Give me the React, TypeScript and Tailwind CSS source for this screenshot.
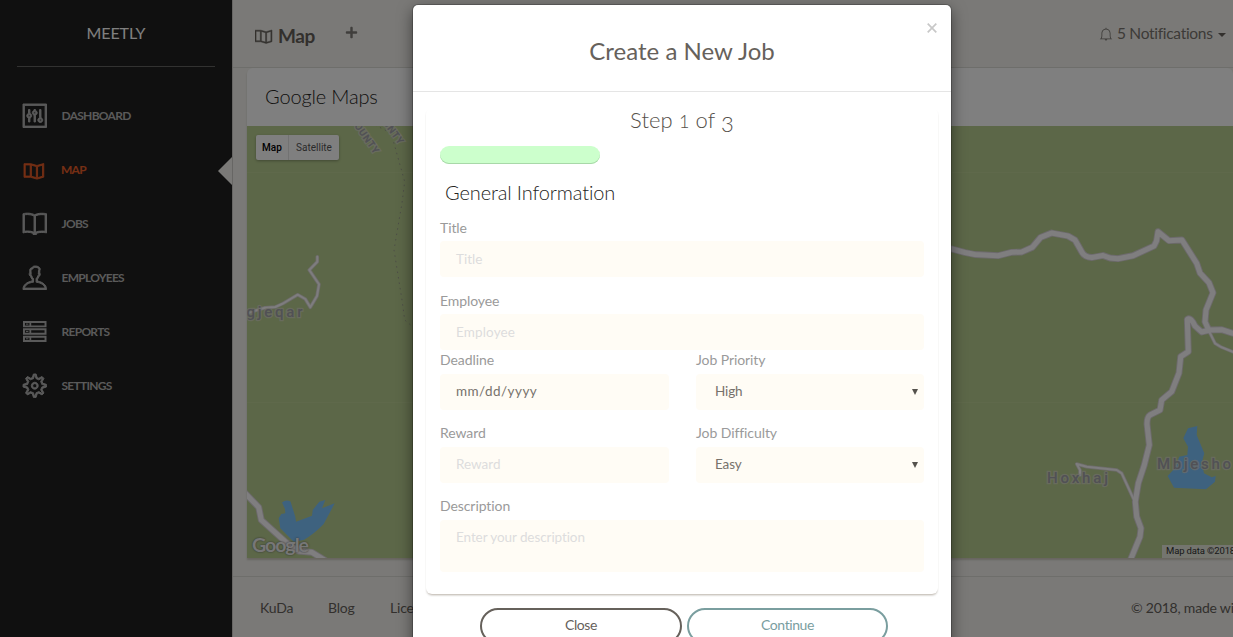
import type { ReactNode } from "react";
import type { IconType } from "react-icons";
import { TfiPanel, TfiMap, TfiBook, TfiUser, TfiSettings, TfiBell } from "react-icons/tfi";
import { FaPlus } from "react-icons/fa";

function StackIcon({ className }: { className?: string; strokeWidth?: number }) {
  return (
    <svg className={className} viewBox="0 0 24 24" fill="none" stroke="currentColor" strokeWidth="2">
      <path d="M1 2h22v4.500H1zM1 9.500h22V14H1zM1 17h22v4.500H1z" />
      <path d="M7.500 2v4.500M7.500 9.500V14M7.500 17v4.500" strokeWidth="1.800" />
      <path d="M3 4.200h2.500M3 11.700h2.500M3 19.200h2.500" strokeWidth="1" />
    </svg>
  );
}

const navItems: { label: string; icon: IconType | typeof StackIcon; active?: boolean }[] = [
  { label: "DASHBOARD", icon: TfiPanel },
  { label: "MAP", icon: TfiMap, active: true },
  { label: "JOBS", icon: TfiBook },
  { label: "EMPLOYEES", icon: TfiUser },
  { label: "REPORTS", icon: StackIcon },
  { label: "SETTINGS", icon: TfiSettings },
];

function Sidebar() {
  return (
    <aside className="h-full w-[232px] shrink-0 bg-[#212120]">
      <div className="mx-[17px] flex h-[67px] items-center justify-center border-b border-white/30 text-base tracking-[-0.1px] text-white">
        MEETLY
      </div>
      <nav className="mt-[22px] flex flex-col">
        {navItems.map(({ label, icon: Icon, active }) => (
          <a
            key={label}
            className={`relative flex h-[54px] items-center pl-[23px] text-xs font-bold tracking-[-0.72px] ${active ? "text-[#eb5e28]" : "text-[#b4b4b4]"}`}
          >
            <Icon strokeWidth={0.7} className={active ? "ml-px mr-4 mt-px size-[21px] overflow-visible" : "mr-[15px] size-[23.500px] overflow-visible"} />
            {label}
            {active && (
              <svg className="absolute right-0 top-[14px] h-7 w-[14px]" viewBox="0 0 14 28">
                <path d="M14 0 0 14 14 28z" fill="#f4f3ef" />
              </svg>
            )}
          </a>
        ))}
      </nav>
    </aside>
  );
}

const mainRoads = [
  "M940 247 L950 248.5 L965 252.5 L975 254.5 L998 255.7 L1011.7 252.3 L1021.7 252 L1032.3 247.3 L1040.7 237.3 L1051.7 233 L1068 236 L1075 240 L1081.7 251.7 Q1084 257 1092 257.5 L1103 255.5 L1110 258 L1118 258.7 L1133 255.7 L1154 246 L1156.5 241 L1158 231.7 L1169 240.7 L1182 240 L1196.7 263.3 L1200 273 L1209 282.7 L1213 292.7 L1206 310 L1205 321.7 L1209 330.7",
  "M1240 335 L1233 333.3 L1221.7 329.7 L1210 330 L1201.7 332 L1195 326 Q1191 317 1187.3 319.3 L1188.3 351.7 L1180.7 356.7 L1179 373 L1171.7 391.7 L1161.7 400 L1160 410 L1150 415 Q1147 417 1147 424 L1149.3 445 L1144.3 465 L1138.3 483.3 L1135.3 501.7 L1136.7 516.7 L1141 528.3 L1140 536.7 L1130 561",
  "M244 492 L258.7 507.3 L261.3 520 L285.3 541.7 L298.7 551 L312 552.3 L326 561",
];
const sideRoads = [
  "M1208 329 L1215 343.3 L1221 347 L1235 352.7",
  "M1080 475 L1080 470 L1076.7 464 L1086.7 466.7 L1116.7 470 L1121.7 473.3 L1134 500",
  "M244 314 L265 307.8 L275.3 307 L283 303.5 L297.7 294.7 L305.3 299 L310.3 307.3 L317 296 L319 284.3 L309.3 270 L317.3 261.7 L317.3 256.7",
];

function MapCanvas() {
  const label = {
    fill: "#a2a2aa",
    stroke: "#dcdccf",
    strokeWidth: 2.5,
    strokeOpacity: 0.7,
    paintOrder: "stroke",
    fontFamily: "Roboto, sans-serif",
  };
  return (
    <svg className="block h-full w-full bg-[#b9cf90]" viewBox="247 126 986 432">
      <path d="M247 172.500H1233M247 402.500H1233" stroke="#c2d49d" strokeOpacity=".6" />
      <g fill="#7cc4ff">
        <path d="M1197.300 426 1196.700 435 1204.300 453.300 1201.700 463.300 1204 473.300 1211.700 477.300 1215.700 476 1215 481.700 1206 489.300 1174 487.700 1167.700 476 1175 468 1179.300 456.700 1187.300 455 1188 446.700 1183.300 438.300 1188 428.300z" />
        <path d="M282 502.500 Q286 499 290.500 501.500 L295.300 516.700 296 521.700 312 515.700 312.700 510 319.300 501.700 325.300 500 322 508.300 334.700 503.300 323.700 524 Q314 534 303.700 540 L293.700 541.700 280.300 528.300 278.700 518.300 281.300 514 285.300 513.300 285 509z" />
      </g>
      <path d="M375 125 391 133 395 147 404.700 181.700 402 203 394 250 402 300 404.700 320 413 327" fill="none" stroke="#9a9b8e" strokeDasharray="1.500 4" />
      <g fill="none" strokeLinecap="round" strokeLinejoin="round">
        {sideRoads.map((d) => <path key={d} d={d} stroke="#dad6d6" strokeWidth="3.500" />)}
        {mainRoads.map((d) => <path key={d} d={d} stroke="#dad4da" strokeWidth="6.800" />)}
        {sideRoads.map((d) => <path key={d} d={d} stroke="#fcfafc" strokeWidth="2" />)}
        {mainRoads.map((d) => <path key={d} d={d} stroke="#fffcff" strokeWidth="5" />)}
      </g>
      <g {...label} fontSize="15" fontWeight="500">
        <text x="246.500" y="316.500" textLength="56">gjeqar</text>
        <text x="1047" y="483" textLength="61">Hoxhaj</text>
        <text x="1157" y="468.500" textLength="74">Mbjesho</text>
      </g>
      <g {...label} fontSize="10" fontWeight="700">
        <text transform="translate(350 120) rotate(55)" textLength="42">COUNTY</text>
        <text transform="translate(374 111) rotate(54)" textLength="42">COUNTY</text>
      </g>
    </svg>
  );
}

function Page() {
  return (
    <main className="flex h-full min-w-0 grow flex-col border-l border-[#cfcdc8] bg-[#f4f3ef]">
      <header className="flex h-[68px] shrink-0 items-center border-b border-[#dddcd6] text-[#66615b]">
        <TfiMap strokeWidth={0.5} className="ml-[22px] mt-1 size-[18px]" />
        <span className="ml-[5px] mt-[6px] text-[19px] font-bold tracking-[-0.4px]">Map</span>
        <FaPlus className="mb-[3px] ml-[30px] size-[13px] text-[#807d79]" />
        <div className="ml-auto mr-[7px] flex items-center text-[15.500px] text-[#7a7570]">
          <TfiBell className="mr-[4px] size-[14px]" />
          <span className="w-[98px] whitespace-nowrap tracking-[-0.3px]">5 Notifications</span>
          <span className="ml-[3px] mt-[3px] border-x-4 border-t-4 border-x-transparent border-t-[#66615b]" />
        </div>
      </header>
      <section className="ml-[14px] h-[490px] shrink-0 rounded-t-md bg-white shadow-[0_2px_2px_rgba(204,197,185,0.9)]">
        <h4 className="flex h-[58px] items-center pb-[2px] pl-[18px] text-[20px] font-light text-[#252422]">
          <span className="tracking-[-0.15px]">Google Maps</span>
        </h4>
        <div className="relative h-[432px]">
          <MapCanvas />
          <div className="absolute left-[9px] top-[9px] flex h-[25px] items-center rounded-xs bg-white font-['Roboto'] text-[10px] shadow-[0_1px_3px_rgba(0,0,0,0.3)]">
            <span className="flex h-full w-[33px] items-center justify-center border-r border-black/10 font-medium text-black">Map</span>
            <span className="w-[50px] text-center text-[#565656]">Satellite</span>
          </div>
          <span className="absolute bottom-0 left-[5px] font-['Lato'] text-[19.500px] font-bold leading-[26px] tracking-[-1px] text-[#eeeeee] [text-shadow:0_0_2px_#555]">Google</span>
          <span className="absolute bottom-0 left-[915px] h-[13px] whitespace-nowrap bg-[#e8ebdf] pl-1 pr-5 font-['Roboto'] text-[9.500px] leading-[12px] tracking-[-0.15px] text-[#333]">Map data ©2018</span>
        </div>
      </section>
      <footer className="mt-[18px] flex grow border-t border-[#dddcd6] pt-[21px] text-sm leading-[20px] tracking-[-0.2px] text-[#66615b]">
        <span className="ml-[27px] w-[68px]">KuDa</span>
        <span className="w-[62px]">Blog</span>
        <span>Licenses</span>
        <span className="ml-auto w-[102px] whitespace-nowrap">© 2018, made with love</span>
      </footer>
    </main>
  );
}

function Label({ children }: { children: ReactNode }) {
  return <label className="block h-5 text-sm font-normal leading-5 tracking-[-0.08px] text-[#9a9a9a]">{children}</label>;
}

const field = "flex h-9 items-center rounded bg-[#fffcf5] px-4 text-[13.500px]";

function TextField({ label, value, filled }: { label: string; value: string; filled?: boolean }) {
  return (
    <div>
      <Label>{label}</Label>
      <div className={`${field} mt-1 pb-px ${filled ? "tracking-[0.45px] text-[#77726c]" : "text-[#dddddd]"}`}>{value}</div>
    </div>
  );
}

function SelectField({ label, value }: { label: string; value: string }) {
  return (
    <div>
      <Label>{label}</Label>
      <div className={`${field} mt-1 justify-between pb-px pl-[19px] pr-[6px] tracking-[-0.15px] text-[#77726c]`}>
        {value}
        <span className="mt-px border-x-[3px] border-t-[6px] border-x-transparent border-t-[#55524d]" />
      </div>
    </div>
  );
}

function JobModal() {
  return (
    <div className="absolute left-[413px] top-[5px] h-[700px] w-[538px] rounded-[5px] bg-white shadow-[0_0_0_1px_rgba(0,0,0,0.2),0_5px_15px_rgba(0,0,0,0.5)]">
      <div className="relative flex h-[87px] items-center justify-center border-b border-[#e5e5e5] pt-[6px]">
        <h4 className="text-2xl leading-8 tracking-[0.03px] text-[#66615b]">Create a New Job</h4>
        <svg className="absolute right-[14px] top-[18px] size-[10px]" viewBox="0 0 10 10">
          <path d="M.700.700 9.300 9.300M9.300.700.700 9.300" stroke="#c8c8c8" strokeWidth="1.700" />
        </svg>
      </div>
      <div className="mx-[13px] mt-4 h-[486px] rounded-md px-[14px] shadow-[0_2px_2px_-1px_rgba(160,145,130,0.55),0_2px_2px_rgba(0,0,0,0.07)]">
        <h5 className="h-[38px] text-center text-[22px] font-light leading-6 tracking-[0.1px] text-[#55504a]">
          Step <span className="text-[18px]">1</span> of <span className="inline-block align-[-4px]">3</span>
        </h5>
        <div className="h-[18px] w-40 rounded-full bg-[#ccffcc] shadow-[inset_0_-1px_0_#a8d8a8]" />
        <h4 className="mt-[14px] h-10 pl-[5px] text-[20px] font-light leading-[28px] tracking-[-0.12px] text-[#252422]">General Information</h4>
        <Label>Title</Label>
        <div className={`${field} mt-[3px] text-[#dddddd]`}>Title</div>
        <div className="mt-[14px]">
          <Label>Employee</Label>
        </div>
        <div className={`${field} mt-[3px] tracking-[0.15px] text-[#dddddd]`}>Employee</div>
        <div className="grid grid-cols-[229px_228px] justify-between gap-y-[13px]">
          <TextField label="Deadline" value="mm/dd/yyyy" filled />
          <SelectField label="Job Priority" value="High" />
          <TextField label="Reward" value="Reward" />
          <SelectField label="Job Difficulty" value="Easy" />
        </div>
        <div className="mt-[13px]">
          <Label>Description</Label>
        </div>
        <div className="mt-1 h-[52px] rounded bg-[#fffcf5] px-4 pt-[7px] text-[13.500px] leading-5 tracking-[-0.08px] text-[#dddddd]">
          Enter your description
        </div>
      </div>
      <div className="mt-[14px] flex justify-center gap-[5px] pl-[4px] text-sm tracking-[-0.4px]">
        <button className="h-9 w-[202px] rounded-[20px] border-2 border-[#66615b] pb-[2px] text-[#66615b]">Close</button>
        <button className="h-9 w-[201px] rounded-[20px] border-2 border-[#7a9e9f] pb-[2px] text-[#7a9e9f]">Continue</button>
      </div>
    </div>
  );
}

export default function App() {
  return (
    <div className="relative flex h-screen w-full overflow-hidden font-['Lato','Open_Sans',sans-serif]">
      <Sidebar />
      <Page />
      <div className="absolute inset-0 bg-black/50" />
      <JobModal />
    </div>
  );
}
